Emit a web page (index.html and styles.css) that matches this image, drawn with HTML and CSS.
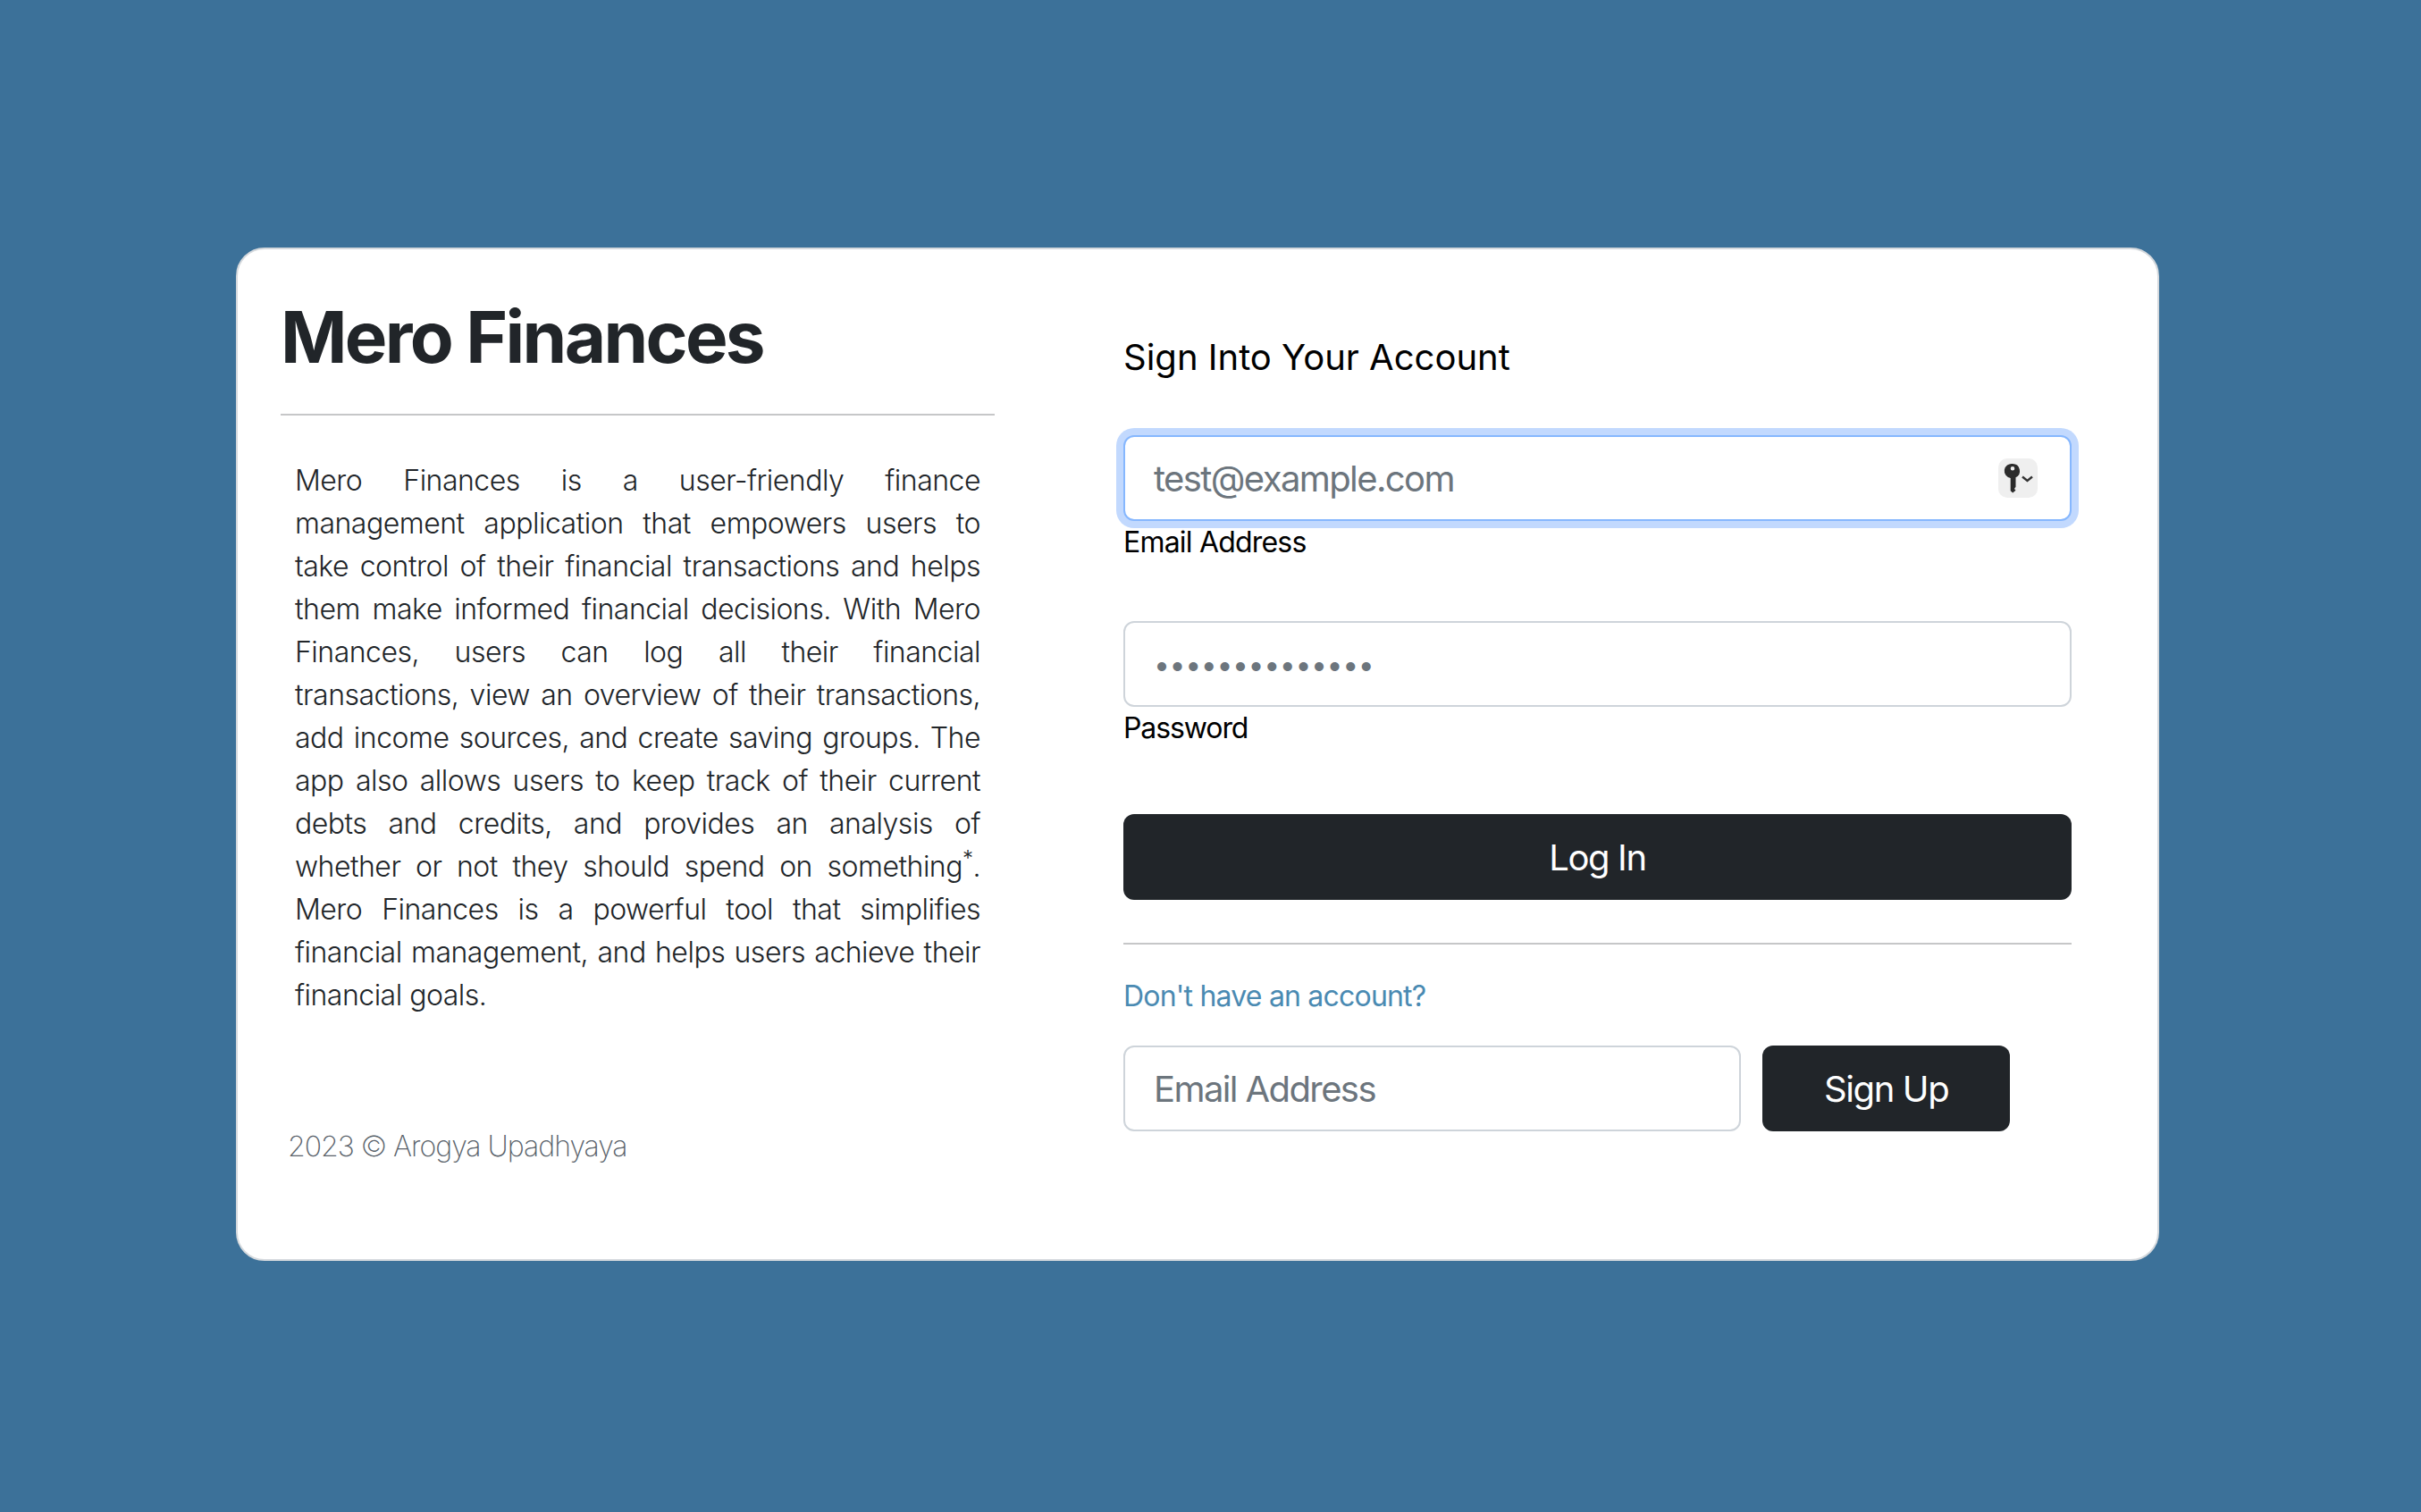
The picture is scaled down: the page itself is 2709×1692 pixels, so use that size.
FILE: index.html
```html
<!DOCTYPE html>
<html lang="en">
<head>
  <meta charset="UTF-8">
  <meta name="viewport" content="width=device-width, initial-scale=1.0">
  <title>Mero Finances</title>
  <link rel="stylesheet" href="styles.css">
</head>
<body>
  <main class="card">
    <section class="about">
      <h1>Mero Finances</h1>
      <hr>
      <p class="intro">Mero Finances is a user-friendly finance management application that empowers users to take control of their financial transactions and helps them make informed financial decisions. With Mero Finances, users can log all their financial transactions, view an overview of their transactions, add income sources, and create saving groups. The app also allows users to keep track of their current debts and credits, and provides an analysis of whether or not they should spend on something<sup>*</sup>. Mero Finances is a powerful tool that simplifies financial management, and helps users achieve their financial goals.</p>
      <p class="credit">2023 © Arogya Upadhyaya</p>
    </section>

    <section class="auth">
      <h2>Sign Into Your Account</h2>
      <form class="login">
        <div class="field">
          <div class="input-wrap">
            <input class="form-input focused" type="email" id="email" placeholder="test@example.com">
            <span class="key-badge">
              <svg width="44" height="44" viewBox="0 0 44 44">
                <path fill="#2b2b2b" fill-rule="evenodd" d="M16 6a8 8 0 0 1 3.5 15.2V32l-1.2 1.3v1.2l1.2 1.3-3.3 2.7-2.5-2.2V22a8 8 0 0 1 2.300-16zm0 3a2.300 2.300 0 1 0 0 4.600 2.300 2.300 0 0 0 0-4.600z"/>
                <path fill="none" stroke="#333" stroke-width="2.400" d="M27 20.500l5.500 4.500 5.500-4.500"/>
              </svg>
            </span>
          </div>
          <label for="email">Email Address</label>
        </div>
        <div class="field">
          <input class="form-input password" type="password" id="password" value="12345678901234">
          <label for="password">Password</label>
        </div>
        <button class="btn btn-block" type="button">Log In</button>
      </form>
      <hr>
      <a class="signup-link" href="#">Don't have an account?</a>
      <form class="signup">
        <input class="form-input" type="email" placeholder="Email Address">
        <button class="btn" type="button">Sign Up</button>
      </form>
    </section>
  </main>
</body>
</html>
```

FILE: styles.css
```css
* {
  box-sizing: border-box;
}
body {
  margin: 0;
  min-height: 100vh;
  padding: 277px 0 0 264px;
  background-color: #3c7199;
  font-family: Inter, "Liberation Sans", sans-serif;
  font-size: 32px;
  line-height: 48px;
  letter-spacing: -0.8px;
  color: #212529;
}
hr {
  margin: 0;
  border: 0;
  border-top: 2px solid #c6c7c8;
}
.card {
  display: flex;
  width: 2152px;
  height: 1134px;
  background: #fff;
  border: 2px solid #d5d9dd;
  border-radius: 32px;
}

/* left column */
.about {
  width: 799px;
  margin-left: 48px;
  padding-top: 50px;
}
h1 {
  margin: 0 0 38px;
  font-size: 80px;
  line-height: 96px;
  font-weight: 700;
  letter-spacing: -2.7px;
}
.intro {
  margin: 49px 0 0;
  padding: 0 16px;
  font-weight: 300;
  letter-spacing: -0.5px;
  text-align: justify;
}
.intro sup {
  font-size: 24px;
  line-height: 0;
}
.credit {
  margin: 121px 0 0 8px;
  font-weight: 200;
  letter-spacing: -1px;
  color: #59626a;
}

/* right column */
.auth {
  width: 1061px;
  margin-left: 144px;
  padding-top: 97px;
}
h2 {
  margin: 0 0 63px;
  font-size: 40px;
  line-height: 48px;
  font-weight: 400;
  letter-spacing: 0;
  color: #000;
}
.field {
  margin-bottom: 64px;
}
.field + .field {
  margin-bottom: 72px;
}
.field + .field label {
  letter-spacing: -1.1px;
}
.field label {
  display: block;
  height: 48px;
  color: #000;
}
.input-wrap {
  position: relative;
}
.form-input {
  display: block;
  width: 100%;
  height: 96px;
  padding: 0 32px;
  background: #fff;
  border: 2px solid #ced4da;
  border-radius: 12px;
  font-family: inherit;
  font-size: 40px;
  letter-spacing: -1.6px;
  color: #6c757d;
  outline: none;
}
.form-input::placeholder {
  color: #6c757d;
  opacity: 1;
}
.form-input.password {
  padding-top: 1px;
  font-size: 32px;
  letter-spacing: -0.4px;
}
.form-input.focused {
  border-color: #86b7fe;
  box-shadow: 0 0 0 8px #c2d9fe;
}
.key-badge {
  position: absolute;
  top: 26px;
  right: 38px;
  width: 44px;
  height: 44px;
  background: #efefef;
  border-radius: 10px;
}
.key-badge svg {
  display: block;
}
.btn {
  height: 96px;
  padding: 0 69px;
  background: #212529;
  border: 0;
  border-radius: 12px;
  font-family: inherit;
  font-size: 40px;
  letter-spacing: -1.4px;
  color: #fff;
}
.btn-block {
  display: block;
  width: 100%;
}
.auth > hr {
  margin-top: 48px;
}
.signup-link {
  display: block;
  margin-top: 34px;
  color: #4a8ab2;
  text-decoration: none;
}
.signup {
  display: flex;
  gap: 24px;
  margin-top: 31px;
}
.signup .form-input {
  width: 691px;
}
```
